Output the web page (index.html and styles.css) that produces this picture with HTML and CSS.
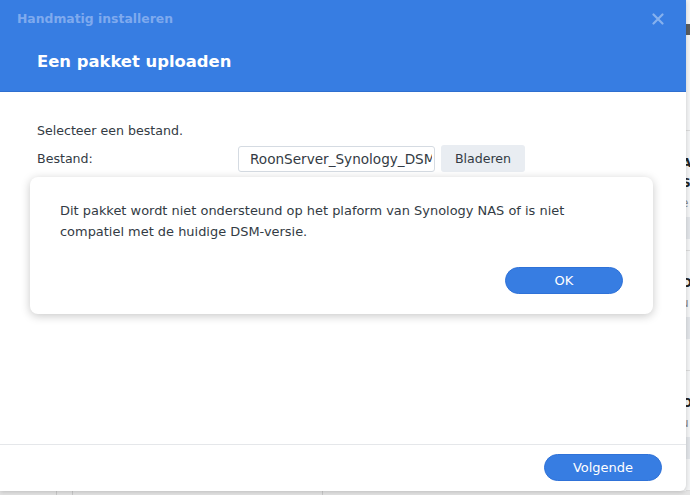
FILE: index.html
```html
<!DOCTYPE html>
<html lang="nl">
<head>
<meta charset="utf-8">
<title>Handmatig installeren</title>
<link rel="stylesheet" href="styles.css">
</head>
<body>
<div class="screen">
  <div class="top-row">
    <div class="dialog">
      <div class="header">
        <div class="window-title">Handmatig installeren</div>
        <div class="close">
          <svg width="12" height="12" viewBox="0 0 12 12"><path d="M1.5 1.5 L10.5 10.5 M10.5 1.5 L1.5 10.5" stroke="#86b1ee" stroke-width="2.2" stroke-linecap="round"/></svg>
        </div>
        <div class="step-title">Een pakket uploaden</div>
      </div>
      <div class="body">
        <p class="intro">Selecteer een bestand.</p>
        <div class="form-row">
          <label class="label">Bestand:</label>
          <div class="file-input"><span class="file-name">RoonServer_Synology_DSM7_x86_64.spk</span></div>
          <button class="browse">Bladeren</button>
        </div>
      </div>
      <div class="footer">
        <button class="primary wide">Volgende</button>
      </div>
      <div class="alert">
        <p class="alert-text">Dit pakket wordt niet ondersteund op het plaform van Synology NAS of is niet compatiel met de huidige DSM-versie.</p>
        <div class="alert-actions">
          <button class="primary">OK</button>
        </div>
      </div>
    </div>
    <div class="side">
      <div class="side-top"><span class="side-icon"></span></div>
      <div class="side-item">
        <span class="dk">A</span><span class="dk">S</span><span class="lt">e</span><span class="blk"></span>
      </div>
      <div class="side-item">
        <span class="dk">D</span><span class="lt">u</span><span class="blk"></span>
      </div>
      <div class="side-item">
        <span class="dk">O</span><span class="lt">u</span><span class="blk"></span>
      </div>
    </div>
  </div>
  <div class="bottom-row">
    <span class="cell c1"></span><span class="cell c2"></span><span class="cell c3"></span><span class="cell c4"></span>
  </div>
</div>
</body>
</html>
```
FILE: styles.css
```css
* { box-sizing: border-box; }
html, body { margin: 0; padding: 0; }
body {
  width: 690px;
  height: 495px;
  overflow: hidden;
  background: #f2f3f4;
  font-family: "DejaVu Sans", Verdana, sans-serif;
  color: #333b44;
}
.screen { display: flex; flex-direction: column; width: 690px; height: 495px; }
.top-row { display: flex; height: 491px; }
.dialog {
  position: relative;
  width: 686px;
  height: 491px;
  background: #fff;
  border-bottom-right-radius: 6px;
  box-shadow: 0 1px 5px rgba(0,0,0,0.18);
  display: flex;
  flex-direction: column;
  z-index: 1;
}
.header {
  position: relative;
  height: 92px;
  background: #377de2;
  border-bottom: 1px solid #2f6fcf;
  padding: 11px 0 0 17px;
}
.window-title {
  font-size: 12.4px;
  font-weight: bold;
  color: #7faaee;
  line-height: 16px;
}
.close {
  position: absolute;
  top: 13px;
  right: 22px;
  width: 12px;
  height: 12px;
  display: flex;
}
.step-title {
  margin: 25px 0 0 20px;
  font-size: 16.4px;
  font-weight: bold;
  color: #fff;
  line-height: 20px;
}
.body { flex: 1; padding: 31px 0 0 37px; }
.intro { margin: 0; font-size: 12.6px; line-height: 16px; }
.form-row { display: flex; align-items: center; margin-top: 6px; height: 27px; }
.label { width: 201px; font-size: 12.6px; }
.file-input {
  width: 197px;
  height: 26px;
  border: 1px solid #d5dbe2;
  border-radius: 3px;
  padding: 0 2px 0 11px;
  display: flex;
}
.file-name {
  display: block;
  flex: 1;
  overflow: hidden;
  white-space: nowrap;
  font-size: 13.6px;
  line-height: 24px;
  color: #333b44;
}
.browse {
  margin-left: 6px;
  width: 84px;
  height: 27px;
  border: none;
  border-radius: 3px;
  background: #e9edf2;
  font-family: inherit;
  font-size: 12.6px;
  color: #333b44;
  padding: 0;
}
.footer {
  height: 47px;
  border-top: 1px solid #e5e7ea;
  display: flex;
  justify-content: flex-end;
  align-items: flex-start;
  padding: 9px 24px 0 0;
}
.primary {
  width: 118px;
  height: 27px;
  border: 1px solid #2f72d8;
  border-radius: 14px;
  background: #377de2;
  color: #fff;
  font-family: inherit;
  font-size: 13px;
  padding: 0;
}
.alert {
  position: absolute;
  left: 30px;
  top: 177px;
  width: 623px;
  height: 137px;
  background: #fff;
  border-radius: 8px;
  box-shadow: 0 2px 10px rgba(0,0,0,0.22);
  padding: 23px 30px 0 30px;
}
.alert-text { margin: 0; font-size: 12.95px; line-height: 21px; color: #333b44; width: 540px; }
.alert-actions { display: flex; justify-content: flex-end; margin-top: 25px; }
.side {
  width: 4px;
  background: #f4f5f6;
  display: flex;
  flex-direction: column;
  overflow: hidden;
}
.side-top { height: 136px; padding-top: 24px; border-bottom: 1px solid #dcdcdc; }
.side-icon { display: block; width: 4px; height: 11px; background: #5a5d60; }
.side-item {
  height: 124px;
  border-bottom: 1px solid #dcdcdc;
  display: flex;
  flex-direction: column;
  padding-top: 22px;
  font-size: 12px;
  line-height: 20px;
}
.dk { color: #222; font-weight: bold; margin-left: -4px; }
.lt { color: #888; margin-left: -5px; }
.blk { display: block; height: 22px; margin-top: 4px; background: #e2e5e9; }
.bottom-row { display: flex; height: 4px; background: #e4e4e4; }
.cell { height: 4px; border-right: 1px solid #c9c9c9; }
.c1 { width: 57px; }
.c2 { width: 16px; }
.c3 { width: 250px; }
.c4 { flex: 1; border-right: none; }
```
